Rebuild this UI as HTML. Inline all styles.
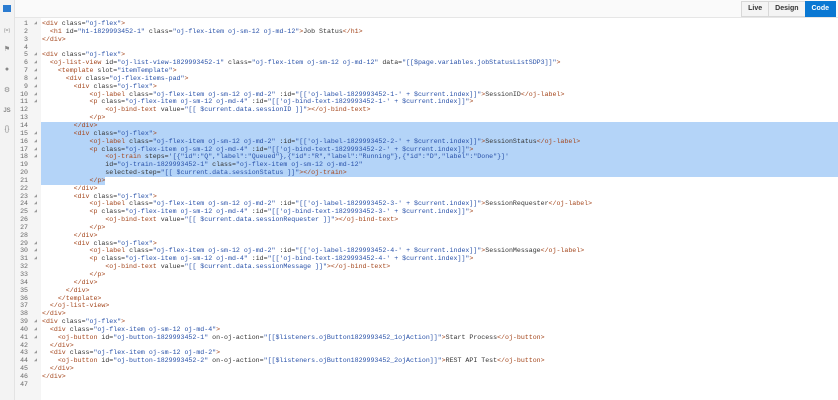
<!DOCTYPE html><html><head><style>
body{margin:0;width:838px;height:400px;overflow:hidden;background:#fff;font-family:"Liberation Sans",sans-serif}
#side{position:absolute;left:0;top:0;width:14px;height:400px;background:#f3f3f3;border-right:1px solid #e3e3e3}
#top{position:absolute;left:15px;top:0;right:0;height:17px;background:#fafafa;border-bottom:1px solid #e6e6e6}
#btns{position:absolute;right:2px;top:1px;display:flex;font-size:7px;font-weight:bold}
#btns div{height:14px;line-height:14px;padding:0 6px;border:1px solid #d8d8d8;background:#f4f4f4;color:#333;margin-left:-1px}
#btns .on{background:#0a78d3;color:#fff;border-color:#0a78d3}
#gut{position:absolute;left:15px;top:18px;width:26px;height:382px;background:#f5f5f5}
#code{position:absolute;left:0;top:20px;width:838px;font-family:"Liberation Mono",monospace;font-size:6.6px}
.l{position:relative;height:7.85px;line-height:7.85px;white-space:pre}
.n{position:absolute;left:15px;width:13px;text-align:right;color:#666}
.f{position:absolute;left:34px;color:#999;font-size:5px}
.t{position:absolute;left:42px;color:#333}
.sel{background:#b4d4f8}
.tg{color:#a4461c}.s{color:#2750a8}
.ic{position:absolute;left:3px;width:8px;font-size:7px;color:#888;text-align:center}
</style></head><body>
<div id="side">
<div style="position:absolute;left:3px;top:5px;width:8px;height:7px;background:#2a7bd0"></div>
<div class="ic" style="top:28px;font-size:5px">(=)</div>
<div class="ic" style="top:45px">⚑</div>
<div class="ic" style="top:66px">●</div>
<div class="ic" style="top:86px">⚙</div>
<div class="ic" style="top:108px;font-size:6px;font-weight:bold">JS</div>
<div class="ic" style="top:126px">{}</div>
</div>
<div id="top"><div id="btns"><div>Live</div><div>Design</div><div class="on">Code</div></div></div>
<div id="gut"></div>
<div id="code"></div>
<script>
var L=[
'<div class="oj-flex">',
'  <h1 id="h1-1829993452-1" class="oj-flex-item oj-sm-12 oj-md-12">Job Status</h1>',
'</div>',
'',
'<div class="oj-flex">',
'  <oj-list-view id="oj-list-view-1829993452-1" class="oj-flex-item oj-sm-12 oj-md-12" data="[[$page.variables.jobStatusListSDP3]]">',
'    <template slot="itemTemplate">',
'      <div class="oj-flex-items-pad">',
'        <div class="oj-flex">',
'            <oj-label class="oj-flex-item oj-sm-12 oj-md-2" :id="[[\'oj-label-1829993452-1-\' + $current.index]]">SessionID</oj-label>',
'            <p class="oj-flex-item oj-sm-12 oj-md-4" :id="[[\'oj-bind-text-1829993452-1-\' + $current.index]]">',
'                <oj-bind-text value="[[ $current.data.sessionID ]]"></oj-bind-text>',
'            </p>',
'        </div>',
'        <div class="oj-flex">',
'            <oj-label class="oj-flex-item oj-sm-12 oj-md-2" :id="[[\'oj-label-1829993452-2-\' + $current.index]]">SessionStatus</oj-label>',
'            <p class="oj-flex-item oj-sm-12 oj-md-4" :id="[[\'oj-bind-text-1829993452-2-\' + $current.index]]">',
'                <oj-train steps=\'[{"id":"Q","label":"Queued"},{"id":"R","label":"Running"},{"id":"D","label":"Done"}]\'',
'                id="oj-train-1829993452-1" class="oj-flex-item oj-sm-12 oj-md-12"',
'                selected-step="[[ $current.data.sessionStatus ]]"></oj-train>',
'            </p>',
'        </div>',
'        <div class="oj-flex">',
'            <oj-label class="oj-flex-item oj-sm-12 oj-md-2" :id="[[\'oj-label-1829993452-3-\' + $current.index]]">SessionRequester</oj-label>',
'            <p class="oj-flex-item oj-sm-12 oj-md-4" :id="[[\'oj-bind-text-1829993452-3-\' + $current.index]]">',
'                <oj-bind-text value="[[ $current.data.sessionRequester ]]"></oj-bind-text>',
'            </p>',
'        </div>',
'        <div class="oj-flex">',
'            <oj-label class="oj-flex-item oj-sm-12 oj-md-2" :id="[[\'oj-label-1829993452-4-\' + $current.index]]">SessionMessage</oj-label>',
'            <p class="oj-flex-item oj-sm-12 oj-md-4" :id="[[\'oj-bind-text-1829993452-4-\' + $current.index]]">',
'                <oj-bind-text value="[[ $current.data.sessionMessage ]]"></oj-bind-text>',
'            </p>',
'        </div>',
'      </div>',
'    </template>',
'  </oj-list-view>',
'</div>',
'<div class="oj-flex">',
'  <div class="oj-flex-item oj-sm-12 oj-md-4">',
'    <oj-button id="oj-button-1829993452-1" on-oj-action="[[$listeners.ojButton1829993452_1ojAction]]">Start Process</oj-button>',
'  </div>',
'  <div class="oj-flex-item oj-sm-12 oj-md-2">',
'    <oj-button id="oj-button-1829993452-2" on-oj-action="[[$listeners.ojButton1829993452_2ojAction]]">REST API Test</oj-button>',
'  </div>',
'</div>',
''];
function esc(s){return s.replace(/&/g,'&amp;').replace(/</g,'&lt;').replace(/>/g,'&gt;');}
function hl(s){
 var o='',re=/("[^"]*"|'[^']*'|<\/?[\w-]+|\/?>)/g,m,i=0;
 while((m=re.exec(s))){o+=esc(s.slice(i,m.index));var t=m[0];
  o+='<span class="'+(t[0]=='"'||t[0]=="'"?'s':'tg')+'">'+esc(t)+'</span>';i=re.lastIndex;}
 return o+esc(s.slice(i));}
var fold={1:1,5:1,6:1,7:1,8:1,9:1,10:1,11:1,15:1,16:1,17:1,18:1,23:1,24:1,25:1,29:1,30:1,31:1,39:1,40:1,41:1,43:1,44:1};
var h='';
for(var k=0;k<L.length;k++){var n=k+1;var sel=(n>=14&&n<=20);
 var line='<div class="l"><span class="n">'+n+'</span>'+(fold[n]?'<span class="f">◢</span>':'');
 if(sel)line+='<div class="sel" style="position:absolute;left:41px;right:0;top:0;bottom:0"></div>';
 if(n==21)line+='<div class="sel" style="position:absolute;left:41px;width:64px;top:0;bottom:0"></div>';
 line+='<span class="t">'+hl(L[k])+'</span></div>';h+=line;}
document.getElementById('code').innerHTML=h;
</script>
</body></html>
